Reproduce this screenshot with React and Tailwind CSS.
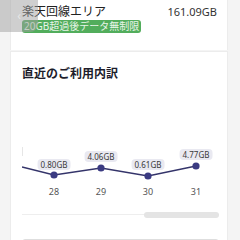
const points = [
  { day: "28", label: "0.80GB", x: 53, y: 174, ly: 163 },
  { day: "29", label: "4.06GB", x: 100, y: 167, ly: 155 },
  { day: "30", label: "0.61GB", x: 147, y: 175, ly: 163 },
  { day: "31", label: "4.77GB", x: 195, y: 165, ly: 153 },
];

function UsageChart() {
  // chart box starts at y=140 in page coords
  const top = 140;
  const path =
    `M0 ${166 - top} ` + points.map((p) => `L${p.x - 21} ${p.y - top}`).join(" ");
  return (
    <div className="relative h-[44px] w-[197px]">
      <svg width="197" height="44" className="absolute left-0 top-0">
        <line x1="0.5" y1="6" x2="0.5" y2="15" stroke="#e6e6e6" strokeWidth="1" />
        <path d={path} fill="none" stroke="#34346a" strokeWidth="1.3" />
        {points.map((p) => (
          <circle key={p.day} cx={p.x - 21} cy={p.y - top} r="3.6" fill="#3b3b82" />
        ))}
      </svg>
      {points.map((p) => (
        <div
          key={p.label}
          className="absolute -translate-x-1/2 rounded-[4px] bg-[#e9e9f1] px-[3px] text-[8px] leading-[11px] text-[#3a3a3a]"
          style={{ left: p.x - 21, top: p.ly - top - 5 }}
        >
          {p.label}
        </div>
      ))}
    </div>
  );
}

export default function App() {
  return (
    <div
      className="relative h-[240px] w-[240px] overflow-hidden bg-[#f4f4f4]"
      style={{ fontFamily: '"Noto Sans", "Noto Sans CJK JP", sans-serif' }}
    >
      <div className="ml-[10px] w-[218px] border-x border-[#ececec] bg-white">
        <div className="flex h-[50px] flex-col px-[11px] pt-[4px]">
          <div className="flex items-center justify-between">
            <span className="text-[12px] leading-[16px] text-[#222]">楽天回線エリア</span>
            <span className="mr-[-1px] text-[11px] leading-[16px] text-[#333]">161.09GB</span>
          </div>
          <div className="self-start rounded-[3px] bg-[#52ad5c] px-[2px] text-[10px] leading-[13px] text-[#e8f5e9]">
            20GB超過後データ無制限
          </div>
        </div>
      </div>
      <div className="mt-[1px] ml-[10px] w-[218px] h-[190px] border-x border-t border-[#ececec] bg-white px-[11px]">
        <div className="pt-[13px] text-[12px] font-bold leading-[18px] text-[#1d1d2b]">
          直近のご利用内訳
        </div>
        <div className="mt-[58px]">
          <UsageChart />
        </div>
        <div className="relative mt-[2px] h-[10px] w-[197px] text-[9px] leading-[10px] text-[#555]">
          {points.map((p) => (
            <span
              key={p.day}
              className="absolute -translate-x-1/2"
              style={{ left: p.x - 21 }}
            >
              {p.day}
            </span>
          ))}
        </div>
        <div className="relative mt-[15px] h-[6px] w-[197px]">
          <div className="absolute left-0 right-0 top-[2px] h-[1px] bg-[#eeeeee]" />
          <div className="absolute right-0 top-0 h-[6px] w-[75px] rounded-full bg-[#e4e4e4]" />
        </div>
        <div className="mt-[21px] h-[20px] w-[197px] rounded-t-[3px] border border-[#dedede]" />
      </div>
      <div className="absolute left-0 top-0 flex h-[32px] w-[38px] items-center justify-center rounded-br-[8px] bg-[#a0a0a0]/50">
        <span className="text-[12px] text-white/50">‹</span>
      </div>
    </div>
  );
}
